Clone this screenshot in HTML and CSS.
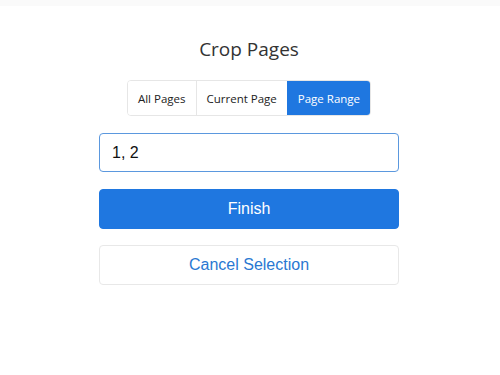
FILE: index.html
```html
<!DOCTYPE html>
<html>
<head>
<meta charset="utf-8">
<link rel="stylesheet" href="styles.css">
</head>
<body>
<div class="topbar"></div>
<div class="page">
  <div class="panel">
    <h1 class="title">Crop Pages</h1>
    <div class="tabs">
      <button class="tab">All Pages</button>
      <button class="tab">Current Page</button>
      <button class="tab active">Page Range</button>
    </div>
    <input class="range" type="text" value="1, 2">
    <button class="btn primary">Finish</button>
    <button class="btn secondary">Cancel Selection</button>
  </div>
</div>
</body>
</html>
```
FILE: styles.css
```css
html, body {
  margin: 0;
  padding: 0;
  background: #ffffff;
}
.topbar {
  height: 6px;
  background: #fafafa;
}
.page {
  width: 498px;
  display: flex;
  justify-content: center;
}
.panel {
  width: 300px;
  display: flex;
  flex-direction: column;
  align-items: center;
}
.title {
  margin: 30px 0 0 0;
  font-family: "Open Sans", "Noto Sans", sans-serif;
  font-weight: 400;
  font-size: 19px;
  line-height: 26px;
  color: #333333;
}
.tabs {
  margin-top: 18px;
  display: flex;
  border: 1px solid #e6e6e6;
  border-radius: 4px;
  overflow: hidden;
}
.tab {
  font-family: "Open Sans", "Noto Sans", sans-serif;
  font-size: 11.5px;
  color: #222222;
  background: #ffffff;
  border: 0;
  border-left: 1px solid #e6e6e6;
  height: 34px;
  padding: 0 10px;
  margin: 0;
}
.tab:first-child {
  border-left: 0;
}
.tab.active {
  background: #1f77e0;
  color: #ffffff;
  border-left-color: #1f77e0;
}
.range {
  box-sizing: border-box;
  margin-top: 17px;
  width: 300px;
  height: 39px;
  border: 1px solid #5b98de;
  border-radius: 4px;
  padding: 0 12px;
  font-family: "Liberation Sans", Arial, sans-serif;
  font-size: 16px;
  color: #111111;
  outline: none;
}
.btn {
  box-sizing: border-box;
  width: 300px;
  height: 40px;
  border-radius: 4px;
  font-family: "Liberation Sans", Arial, sans-serif;
  font-size: 16px;
  margin: 0;
  padding: 0;
}
.primary {
  margin-top: 17px;
  background: #1f77e0;
  border: 1px solid #1f77e0;
  color: #ffffff;
}
.secondary {
  margin-top: 16px;
  background: #ffffff;
  border: 1px solid #e8e8e8;
  color: #2a78d2;
}
```
